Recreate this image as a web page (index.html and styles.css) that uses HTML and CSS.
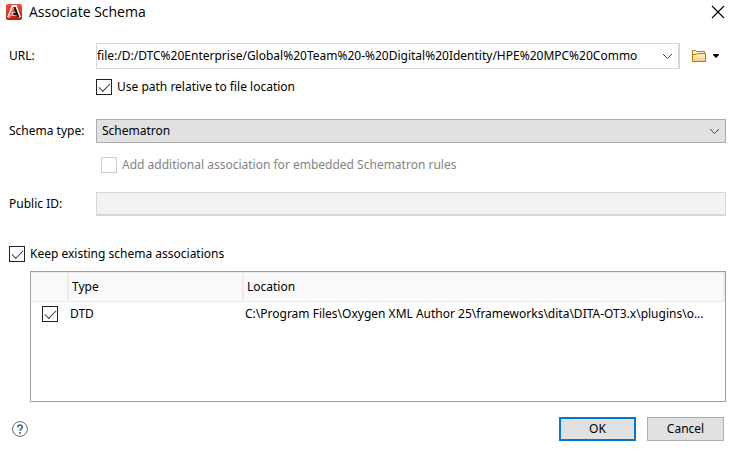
FILE: index.html
```html
<!DOCTYPE html>
<html lang="en">
<head>
<meta charset="utf-8">
<meta name="viewport" content="width=device-width, initial-scale=1">
<title>Associate Schema</title>
<link rel="stylesheet" href="styles.css">
</head>
<body>
<main class="dialog">
  <header class="titlebar">
    <svg class="logo" viewBox="0 0 16 16" aria-hidden="true">
      <defs><linearGradient id="red" x1="0" y1="0" x2="0" y2="1"><stop offset="0" stop-color="#f0503c"/><stop offset="1" stop-color="#c01c08"/></linearGradient></defs>
      <rect width="16" height="16" rx="2" fill="url(#red)"/>
      <path d="M2.500 13.500 7 2.500h2.500l4 11M4.500 10h7" fill="none" stroke="#fff" stroke-width="3"/>
      <path d="M3 13.500 7.500 3M4.500 10h6" fill="none" stroke="#d93a28" stroke-width="1"/>
      <path d="M8.500 3 12.500 13.500M7.500 10H11" fill="none" stroke="#111" stroke-width="2"/>
    </svg>
    <h1 class="title">Associate Schema</h1>
    <button class="icon-button close" type="button" aria-label="Close">
      <svg width="14" height="14" viewBox="0 0 14 14"><path d="M1 1l12 12M13 1 1 13" fill="none" stroke="#000" stroke-width="1.100"/></svg>
    </button>
  </header>

  <form class="form">
    <div class="row row-url">
      <label for="url">URL:</label>
      <div class="url-line">
        <div class="combo">
          <input id="url" type="text" value="file:/D:/DTC%20Enterprise/Global%20Team%20-%20Digital%20Identity/HPE%20MPC%20Commo">
          <button class="icon-button" type="button" aria-label="Show recent URLs">
            <svg width="11" height="7" viewBox="0 0 11 7"><path d="M1 1l4.500 4.500L10 1" fill="none" stroke="#444"/></svg>
          </button>
        </div>
        <button class="icon-button browse" type="button" aria-label="Browse">
          <svg width="14" height="12" viewBox="0 0 14 12">
            <defs><linearGradient id="gold" x1="0" y1="0" x2="0" y2="1"><stop offset="0" stop-color="#fff2c8"/><stop offset="1" stop-color="#f8cd78"/></linearGradient></defs>
            <path d="M.5 11.500V.5h3l1 1h8v2h1v8z" fill="#fff4d8" stroke="#bd7b0c"/>
            <path d="M.5 11.500v-7h4l1-1h8v8z" fill="url(#gold)" stroke="#bd7b0c"/>
          </svg>
          <svg width="6" height="4" viewBox="0 0 6 4"><path d="M0 0h6v1L3 4 0 1z"/></svg>
        </button>
      </div>
    </div>
    <label class="check check-relative"><input type="checkbox" checked>Use path relative to file location</label>

    <div class="row row-type">
      <label for="type">Schema type:</label>
      <div class="select">
        <select id="type"><option>Schematron</option></select>
        <svg class="select-arrow" width="11" height="7" viewBox="0 0 11 7" aria-hidden="true"><path d="M1 1l4.500 4.500L10 1" fill="none" stroke="#444"/></svg>
      </div>
    </div>
    <label class="check check-embedded"><input type="checkbox" disabled>Add additional association for embedded Schematron rules</label>

    <div class="row row-public">
      <label for="public-id">Public ID:</label>
      <input id="public-id" class="public-id" type="text" disabled>
    </div>

    <label class="check check-keep"><input type="checkbox" checked>Keep existing schema associations</label>

    <div class="associations">
      <table>
        <colgroup><col class="col-check"><col class="col-type"><col></colgroup>
        <thead><tr><th></th><th>Type</th><th>Location</th></tr></thead>
        <tbody>
          <tr>
            <td class="cell-check"><input type="checkbox" checked aria-label="Keep DTD association"></td>
            <td>DTD</td>
            <td>C:\Program Files\Oxygen XML Author 25\frameworks\dita\DITA-OT3.x\plugins\o...</td>
          </tr>
        </tbody>
      </table>
    </div>

    <footer class="actions">
      <button class="icon-button help" type="button" aria-label="Help">
        <svg width="16" height="16" viewBox="0 0 16 16">
          <circle cx="8" cy="8" r="7.400" fill="#fff" stroke="#666"/>
          <path d="M5.800 6.200C5.800 3.400 10.300 3.400 10.300 6.100 10.300 7.800 8.100 7.800 8.100 9.700M8.100 10.900v1.800" fill="none" stroke="#3d5fae" stroke-width="1.700"/>
        </svg>
      </button>
      <button class="button primary" type="submit">OK</button>
      <button class="button" type="button">Cancel</button>
    </footer>
  </form>
</main>
</body>
</html>
```
FILE: styles.css
```css
* {
  box-sizing: border-box;
}

body {
  margin: 0;
  background: #fff;
  color: #000;
  font: 12px/16px "Noto Sans", sans-serif;
}

input,
select,
button {
  margin: 0;
  color: inherit;
  font: inherit;
}

.icon-button {
  display: flex;
  align-items: center;
  padding: 0;
  border: 0;
  background: none;
}

.titlebar {
  display: flex;
  align-items: center;
  gap: 7px;
  height: 24px;
  padding: 0 10px 0 6px;
}

.logo {
  width: 16px;
  height: 16px;
}

.title {
  flex: 1;
  margin: 0;
  font: 14px/24px "Open Sans", sans-serif;
}

.form {
  padding: 19px 9px 0;
}

.row {
  display: grid;
  grid-template-columns: 87px minmax(0, 1fr);
  align-items: center;
}

.url-line {
  display: flex;
}

.combo {
  display: flex;
  flex: 1;
  min-width: 0;
  height: 26px;
  padding-right: 5px;
  border: 1px solid #d6d6d6;
  border-right-width: 2px;
}

.combo input {
  flex: 1;
  min-width: 0;
  margin-right: 8px;
  padding: 0;
  border: 0;
  outline: 0;
  background: none;
}

.browse {
  gap: 7px;
  width: 46px;
  padding-left: 12px;
}

.check {
  display: flex;
  align-items: center;
  gap: 5px;
  width: fit-content;
}

input[type="checkbox"] {
  appearance: none;
  flex: none;
  width: 16px;
  height: 16px;
  border: 1px solid #222;
  background: #fff;
}

input[type="checkbox"]:checked::before {
  content: "";
  display: block;
  width: 10px;
  height: 5px;
  margin: 3px 0 0 2px;
  border: solid #444;
  border-width: 0 0 1px 1px;
  transform: rotate(-45deg);
}

input[type="checkbox"]:disabled {
  border-color: #ccc;
}

.check-relative {
  margin: 10px 0 0 87px;
}

.row-type {
  margin-top: 24px;
}

.select {
  position: relative;
}

.select select {
  display: block;
  appearance: none;
  width: 100%;
  height: 24px;
  padding: 0 24px 0 5px;
  border: 1px solid #adadad;
  border-radius: 0;
  background: #e1e1e1;
}

.select-arrow {
  position: absolute;
  top: 9px;
  right: 6px;
  pointer-events: none;
}

.check-embedded {
  margin: 14px 0 0 92px;
  color: #838383;
}

.row-public {
  margin-top: 19px;
}

.public-id {
  width: 100%;
  height: 24px;
  border: 1px solid #d6d6d6;
  border-bottom-width: 2px;
  background: #f2f2f2;
}

.check-keep {
  margin-top: 30px;
}

.associations {
  height: 131px;
  margin: 9px 0 0 21px;
  border: 1px solid #a0a0a0;
}

table {
  width: 100%;
  border-collapse: separate;
  border-spacing: 0;
  table-layout: fixed;
}

.col-check {
  width: 38px;
}

.col-type {
  width: 175px;
}

th {
  height: 30px;
  padding: 0 0 0 3px;
  border: solid #ebebeb;
  border-width: 1px 2px 1px 0;
  background: #f9f9f9;
  font-weight: 400;
  text-align: left;
}

td {
  height: 24px;
  padding: 0 1px;
  overflow: hidden;
  text-overflow: ellipsis;
  white-space: nowrap;
}

.cell-check {
  padding: 0 0 0 11px;
}

.cell-check input {
  display: block;
}

.actions {
  display: flex;
  align-items: center;
  gap: 11px;
  margin-top: 15px;
  padding: 0 2px 0 3px;
}

.help {
  margin-right: auto;
}

.button {
  width: 77px;
  height: 24px;
  padding: 0;
  border: 1px solid #adadad;
  background: #e1e1e1;
}

.primary {
  border: 2px solid #0078d7;
}
```
